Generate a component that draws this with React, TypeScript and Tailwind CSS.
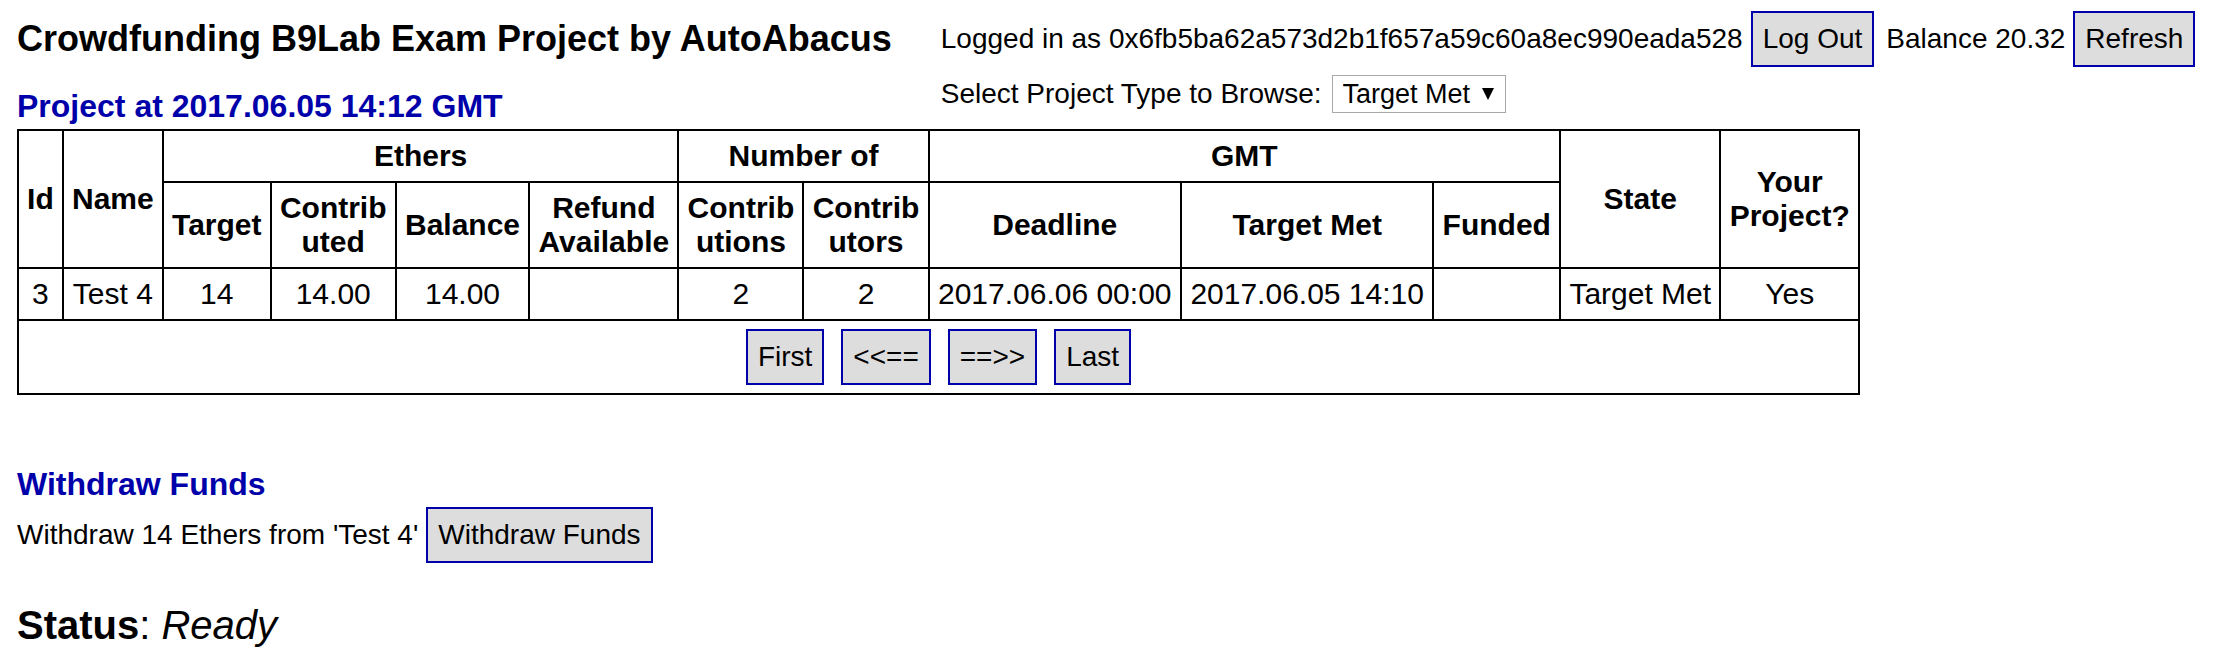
import type { ReactNode } from "react";

const cell = "border-2 border-black p-2 text-center align-middle";
const head = `${cell} font-bold`;

function ActionButton({ children }: { children: ReactNode }) {
  return (
    <button
      type="button"
      className="shrink-0 border-2 border-[#0000aa] bg-[#dddddd] p-2.5 text-[28px] leading-8 whitespace-nowrap"
    >
      {children}
    </button>
  );
}

function SectionTitle({ children }: { children: ReactNode }) {
  return <h2 className="text-[32px] leading-9 font-bold text-[#0000aa]">{children}</h2>;
}

const project = {
  id: "3",
  name: "Test 4",
  target: "14",
  contributed: "14.00",
  balance: "14.00",
  refund: "",
  contributions: "2",
  contributors: "2",
  deadline: "2017.06.06 00:00",
  targetMet: "2017.06.05 14:10",
  funded: "",
  state: "Target Met",
  yours: "Yes",
};

export default function App() {
  return (
    <div className="min-h-screen bg-white px-[17px] pt-[11px] pb-4 font-['Liberation_Sans',Arial,sans-serif] text-[28px] leading-8 text-black">
      <header className="flex items-start gap-[49px]">
        <div className="flex shrink-0 flex-col gap-[29px] pt-2">
          <h1 className="text-4xl leading-10 font-bold whitespace-nowrap">
            Crowdfunding B9Lab Exam Project by AutoAbacus
          </h1>
          <SectionTitle>Project at 2017.06.05 14:12 GMT</SectionTitle>
        </div>
        <div className="flex flex-col gap-2">
          <div className="flex items-center gap-2 whitespace-nowrap">
            <span>Logged in as 0x6fb5ba62a573d2b1f657a59c60a8ec990eada528</span>
            <ActionButton>Log Out</ActionButton>
            <span className="ml-1">Balance 20.32</span>
            <ActionButton>Refresh</ActionButton>
          </div>
          <div className="flex items-center gap-2.5 whitespace-nowrap">
            <label htmlFor="project-type">Select Project Type to Browse:</label>
            <div className="relative">
              <select
                id="project-type"
                defaultValue="Target Met"
                className="block h-[38px] appearance-none border border-[#a9a9a9] bg-white pr-[34px] pl-2.5 text-[27px] leading-8"
              >
                <option>Target Met</option>
              </select>
              <svg
                aria-hidden="true"
                viewBox="0 0 12 12"
                className="pointer-events-none absolute top-[13px] right-3 size-3"
              >
                <path d="M0 0h12L6 12z" />
              </svg>
            </div>
          </div>
        </div>
      </header>

      <main>
        <table className="mt-[5px] min-w-[1843px] border-collapse text-3xl leading-[34px] whitespace-nowrap">
          <thead>
            <tr>
              <th rowSpan={2} className={head}>Id</th>
              <th rowSpan={2} className={head}>Name</th>
              <th colSpan={4} className={head}>Ethers</th>
              <th colSpan={2} className={head}>Number of</th>
              <th colSpan={3} className={head}>GMT</th>
              <th rowSpan={2} className={head}>State</th>
              <th rowSpan={2} className={head}>Your<br />Project?</th>
            </tr>
            <tr>
              <th className={head}>Target</th>
              <th className={head}>Contrib<br />uted</th>
              <th className={head}>Balance</th>
              <th className={head}>Refund<br />Available</th>
              <th className={head}>Contrib<br />utions</th>
              <th className={head}>Contrib<br />utors</th>
              <th className={head}>Deadline</th>
              <th className={head}>Target Met</th>
              <th className={head}>Funded</th>
            </tr>
          </thead>
          <tbody>
            <tr>
              {Object.entries(project).map(([key, value]) => (
                <td key={key} className={cell}>{value}</td>
              ))}
            </tr>
          </tbody>
          <tfoot>
            <tr>
              <td colSpan={13} className={cell}>
                <div className="flex justify-center gap-[17px]">
                  <ActionButton>First</ActionButton>
                  <ActionButton>&lt;&lt;==</ActionButton>
                  <ActionButton>==&gt;&gt;</ActionButton>
                  <ActionButton>Last</ActionButton>
                </div>
              </td>
            </tr>
          </tfoot>
        </table>

        <section className="mt-[71px]">
          <SectionTitle>Withdraw Funds</SectionTitle>
          <div className="mt-[5px] flex items-center gap-2">
            <span>Withdraw 14 Ethers from 'Test 4'</span>
            <ActionButton>Withdraw Funds</ActionButton>
          </div>
        </section>
      </main>

      <p className="mt-[39px] text-[40px] leading-[46px]">
        <strong>Status</strong>: <em>Ready</em>
      </p>
    </div>
  );
}
